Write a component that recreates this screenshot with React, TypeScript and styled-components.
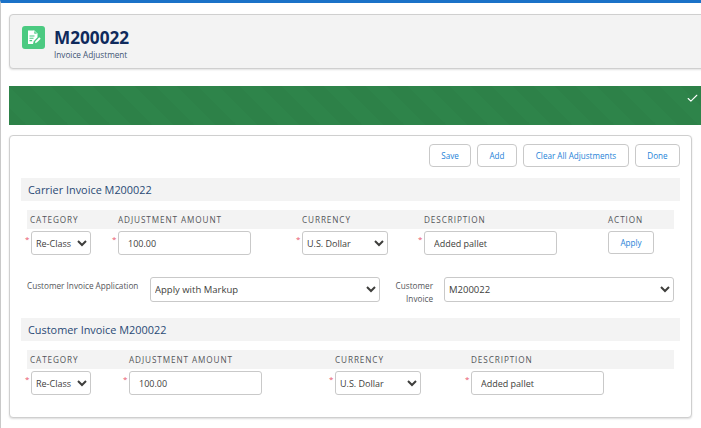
import React from 'react';
import styled, { createGlobalStyle } from 'styled-components';
import { Check } from 'lucide-react';

const GlobalStyle = createGlobalStyle`
  html, body {
    margin: 0;
    padding: 0;
    background: #fff;
    overflow: hidden;
    font-family: 'Open Sans', 'Liberation Sans', sans-serif;
    color: #3e3e3c;
  }
  * {
    box-sizing: border-box;
  }
`;

const Page = styled.div`
  width: 701px;
  height: 428px;
  border-top: 3px solid #1b72c8;
  border-left: 1px solid #c9c9c9;
  padding: 11px 0 0 8px;
  overflow: hidden;
`;

const HeaderCard = styled.header`
  display: flex;
  align-items: flex-start;
  gap: 9px;
  width: 700px;
  height: 55px;
  padding: 11px 12px 0;
  background: #f3f3f3;
  border: 1px solid #cfcfcf;
  border-radius: 4px;
  box-shadow: 0 1px 2px rgba(0, 0, 0, 0.12);
`;

const IconTile = styled.div`
  display: flex;
  align-items: center;
  justify-content: center;
  width: 23px;
  height: 23px;
  border-radius: 3px;
  background: #4bca81;
`;

const TitleBlock = styled.div`
  display: flex;
  flex-direction: column;
`;

const Title = styled.h1`
  margin: 0;
  font-size: 17.2px;
  line-height: 24px;
  font-weight: 700;
  color: #0f2a5c;
`;

const Subtitle = styled.span`
  font-size: 8.2px;
  line-height: 10px;
  color: #3f5474;
`;

const Banner = styled.div`
  display: flex;
  align-items: flex-start;
  justify-content: flex-end;
  width: 700px;
  height: 39px;
  margin-top: 17px;
  padding: 6px 10px 0 0;
  color: #fff;
  background-color: #2e844a;
  background-image: linear-gradient(
    45deg,
    rgba(0, 0, 0, 0.025) 25%,
    transparent 25%,
    transparent 50%,
    rgba(0, 0, 0, 0.025) 50%,
    rgba(0, 0, 0, 0.025) 75%,
    transparent 75%
  );
  background-size: 42px 42px;
`;

const Card = styled.main`
  width: 683px;
  height: 283px;
  margin-top: 10px;
  padding: 8px 11px 0;
  background: #fff;
  border: 1px solid #cfcfcf;
  border-radius: 4px;
  box-shadow: 0 1px 2px rgba(0, 0, 0, 0.14);
`;

const Toolbar = styled.div`
  display: flex;
  justify-content: flex-end;
  gap: 6px;
`;

const Button = styled.button<{ $width: number }>`
  width: ${({ $width }) => $width}px;
  height: 23px;
  padding: 0;
  font-family: inherit;
  font-size: 8.1px;
  color: #2483d8;
  background: #fff;
  border: 1px solid #c9c9c9;
  border-radius: 4px;
`;

const SectionTitle = styled.h2<{ $top: number }>`
  height: 23px;
  margin: ${({ $top }) => $top}px 0 0;
  padding-left: 7px;
  font-size: 10.9px;
  line-height: 23px;
  font-weight: 400;
  color: #2a4a75;
  background: #f3f3f3;
`;

const Grid = styled.div<{ $columns: string }>`
  display: grid;
  grid-template-columns: ${({ $columns }) => $columns};
  margin: 0 6px;
`;

const HeadRow = styled(Grid)`
  height: 19px;
  margin-top: 9px;
  background: #f3f3f3;
`;

const HeadCell = styled.div<{ $inset?: boolean }>`
  padding-left: ${({ $inset }) => ($inset ? 3 : 0)}px;
  font-size: 8.2px;
  line-height: 19px;
  letter-spacing: 0.9px;
  color: #54565a;
  white-space: nowrap;
`;

const BodyRow = styled(Grid)`
  margin-top: 2px;
  align-items: start;
`;

const Field = styled.div<{ $width: number; $inset?: boolean }>`
  position: relative;
  width: ${({ $width }) => $width}px;
  margin-left: ${({ $inset }) => ($inset ? 4 : 0)}px;

  &::before {
    content: '*';
    position: absolute;
    top: 3px;
    left: -6px;
    font-size: 8px;
    line-height: 10px;
    color: #e8566a;
  }
`;

const controlStyles = `
  display: block;
  width: 100%;
  height: 24px;
  font-family: inherit;
  font-size: 9px;
  color: #3e3e3c;
  background: #fff;
  border: 1px solid #c9c9c9;
  border-radius: 3px;
  outline: none;
`;

const TextInput = styled.input`
  ${controlStyles}
  padding: 0 9px;
`;

const Select = styled.select`
  ${controlStyles}
  padding: 0;
`;

const ApplyButton = styled.button`
  width: 46px;
  height: 23px;
  padding: 0;
  font-family: inherit;
  font-size: 8.1px;
  color: #2483d8;
  background: #fff;
  border: 1px solid #c9c9c9;
  border-radius: 3px;
`;

const ApplicationRow = styled.div`
  display: grid;
  grid-template-columns: 123px 230px 53px 11px 230px;
  align-items: start;
  margin: 22px 6px 0;
  height: 41px;
`;

const FieldLabel = styled.label<{ $right?: boolean }>`
  padding-top: 2px;
  font-size: 8.2px;
  line-height: 13px;
  color: #54565a;
  text-align: ${({ $right }) => ($right ? 'right' : 'left')};
`;

const WideSelect = styled.select`
  ${controlStyles}
  height: 25px;
  padding: 0;
  font-size: 9.5px;
`;

const Gap = styled.span``;

const carrierColumns = '91px 184px 122px 184px 66px';
const customerColumns = '102px 206px 136px 203px';

const DocumentIcon = () => (
  <svg width="17" height="17" viewBox="0 0 17 17" fill="none">
    <path d="M3 1.5h6l3.5 3.5v3.2l-3.8 4L8 15H3z" fill="#fff" />
    <path d="M9 1.5V5h3.5z" fill="#4bca81" stroke="#fff" strokeWidth="0.6" />
    <path d="M4.5 7h5M4.5 9.3h4M4.5 11.6h2.6" stroke="#4bca81" strokeWidth="1.1" />
    <path d="M10 14.2l.5-2 3.8-3.9 1.4 1.4-3.8 3.9z" fill="#fff" />
  </svg>
);

interface AdjustmentRowProps {
  columns: string;
  withAction?: boolean;
}

const AdjustmentRows: React.FC<AdjustmentRowProps> = ({ columns, withAction }) => (
  <>
    <HeadRow $columns={columns}>
      <HeadCell $inset>CATEGORY</HeadCell>
      <HeadCell>ADJUSTMENT AMOUNT</HeadCell>
      <HeadCell>CURRENCY</HeadCell>
      <HeadCell>DESCRIPTION</HeadCell>
      {withAction && <HeadCell>ACTION</HeadCell>}
    </HeadRow>
    <BodyRow $columns={columns}>
      <Field $width={60} $inset>
        <Select defaultValue="Re-Class">
          <option>Re-Class</option>
        </Select>
      </Field>
      <Field $width={133}>
        <TextInput defaultValue="100.00" />
      </Field>
      <Field $width={86}>
        <Select defaultValue="U.S. Dollar">
          <option>U.S. Dollar</option>
        </Select>
      </Field>
      <Field $width={133}>
        <TextInput defaultValue="Added pallet" />
      </Field>
      {withAction && <ApplyButton>Apply</ApplyButton>}
    </BodyRow>
  </>
);

const App: React.FC = () => (
  <>
    <GlobalStyle />
    <Page>
      <HeaderCard>
        <IconTile>
          <DocumentIcon />
        </IconTile>
        <TitleBlock>
          <Title>M200022</Title>
          <Subtitle>Invoice Adjustment</Subtitle>
        </TitleBlock>
      </HeaderCard>
      <Banner>
        <Check size={13} strokeWidth={2} />
      </Banner>
      <Card>
        <Toolbar>
          <Button $width={42}>Save</Button>
          <Button $width={40}>Add</Button>
          <Button $width={106}>Clear All Adjustments</Button>
          <Button $width={45}>Done</Button>
        </Toolbar>
        <SectionTitle $top={11}>Carrier Invoice M200022</SectionTitle>
        <AdjustmentRows columns={carrierColumns} withAction />
        <ApplicationRow>
          <FieldLabel>Customer Invoice Application</FieldLabel>
          <WideSelect defaultValue="Apply with Markup">
            <option>Apply with Markup</option>
          </WideSelect>
          <FieldLabel $right>Customer Invoice</FieldLabel>
          <Gap />
          <WideSelect defaultValue="M200022">
            <option>M200022</option>
          </WideSelect>
        </ApplicationRow>
        <SectionTitle $top={0}>Customer Invoice M200022</SectionTitle>
        <AdjustmentRows columns={customerColumns} />
      </Card>
    </Page>
  </>
);

export default App;
